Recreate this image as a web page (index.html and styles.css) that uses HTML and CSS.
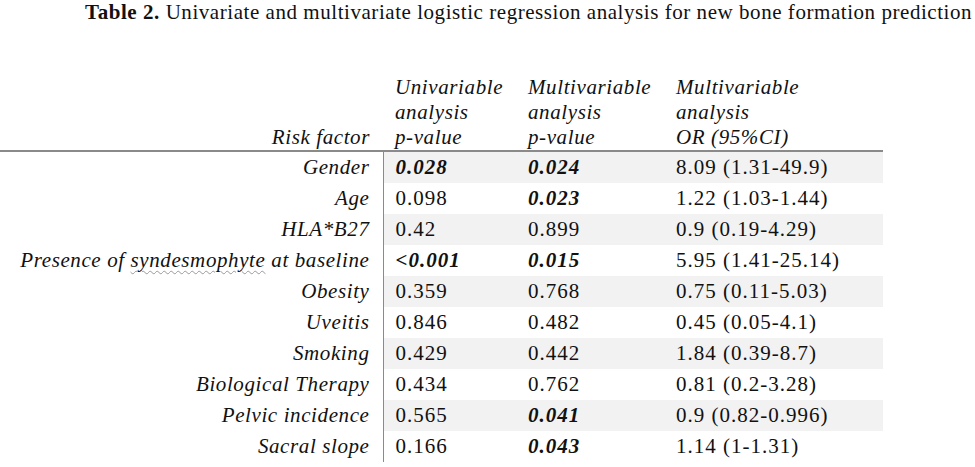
FILE: index.html
```html
<!DOCTYPE html>
<html>
<head>
<meta charset="utf-8">
<link rel="stylesheet" href="styles.css">
</head>
<body>
<div class="page">
  <h1 class="title"><b>Table 2.</b> Univariate and multivariate logistic regression analysis for new bone formation prediction</h1>
  <table class="tbl">
    <thead>
      <tr>
        <th class="rf">Risk factor</th>
        <th class="c2">Univariable<br>analysis<br>p-value</th>
        <th class="c3">Multivariable<br>analysis<br>p-value</th>
        <th class="c4">Multivariable<br>analysis<br>OR (95%CI)</th>
      </tr>
    </thead>
    <tbody>
      <tr class="g"><td class="rf">Gender</td><td class="sig">0.028</td><td class="sig">0.024</td><td>8.09 (1.31-49.9)</td></tr>
      <tr><td class="rf">Age</td><td>0.098</td><td class="sig">0.023</td><td>1.22 (1.03-1.44)</td></tr>
      <tr class="g"><td class="rf">HLA*B27</td><td>0.42</td><td>0.899</td><td>0.9 (0.19-4.29)</td></tr>
      <tr><td class="rf">Presence of <span class="squig">syndesmophyte</span> at baseline</td><td class="sig">&lt;0.001</td><td class="sig">0.015</td><td>5.95 (1.41-25.14)</td></tr>
      <tr class="g"><td class="rf">Obesity</td><td>0.359</td><td>0.768</td><td>0.75 (0.11-5.03)</td></tr>
      <tr><td class="rf">Uveitis</td><td>0.846</td><td>0.482</td><td>0.45 (0.05-4.1)</td></tr>
      <tr class="g"><td class="rf">Smoking</td><td>0.429</td><td>0.442</td><td>1.84 (0.39-8.7)</td></tr>
      <tr><td class="rf">Biological Therapy</td><td>0.434</td><td>0.762</td><td>0.81 (0.2-3.28)</td></tr>
      <tr class="g"><td class="rf">Pelvic incidence</td><td>0.565</td><td class="sig">0.041</td><td>0.9 (0.82-0.996)</td></tr>
      <tr><td class="rf">Sacral slope</td><td>0.166</td><td class="sig">0.043</td><td>1.14 (1-1.31)</td></tr>
    </tbody>
  </table>
</div>
</body>
</html>
```
FILE: styles.css
```css
html, body {
  margin: 0;
  padding: 0;
  background: #ffffff;
}
body {
  font-family: "Liberation Serif", "Times New Roman", serif;
  color: #111;
  overflow: hidden;
}
.page {
  width: 975px;
  height: 467px;
}
.title {
  margin: 0;
  padding: 1px 0 0 85px;
  font-size: 21px;
  font-weight: normal;
  line-height: 22px;
  letter-spacing: 0.55px;
  white-space: nowrap;
}
.title b {
  font-weight: bold;
}
.tbl {
  margin-top: 52px;
  border-collapse: collapse;
  width: 883px;
  table-layout: fixed;
  font-size: 21px;
  letter-spacing: 0.6px;
}
.tbl th {
  font-weight: normal;
  font-style: italic;
  text-align: left;
  vertical-align: bottom;
  line-height: 25px;
  padding: 0 0 0 12px;
  border-bottom: 2px solid #8a8a8a;
  white-space: nowrap;
}
.tbl th.rf {
  text-align: right;
  padding: 0 13px 0 0;
  width: 370px;
}
.tbl th.c2 { width: 121px; }
.tbl th.c3 { width: 136px; }
.tbl td {
  height: 31px;
  padding: 0 0 0 12px;
  line-height: 31px;
  white-space: nowrap;
  vertical-align: middle;
  letter-spacing: 1px;
}
.tbl td.rf {
  font-style: italic;
  text-align: right;
  padding: 0 13px 0 0;
  border-right: 1.5px solid #8a8a8a;
  background: #fff;
  letter-spacing: 0.6px;
}
.tbl tr.g td {
  background: #f2f2f2;
}
.tbl tr.g td.rf {
  background: #fff;
}
.tbl td.sig {
  font-weight: bold;
  font-style: italic;
}
.squig {
  text-decoration: underline wavy #9a9a9a;
  text-decoration-thickness: 1px;
  text-underline-offset: 3px;
}
```
